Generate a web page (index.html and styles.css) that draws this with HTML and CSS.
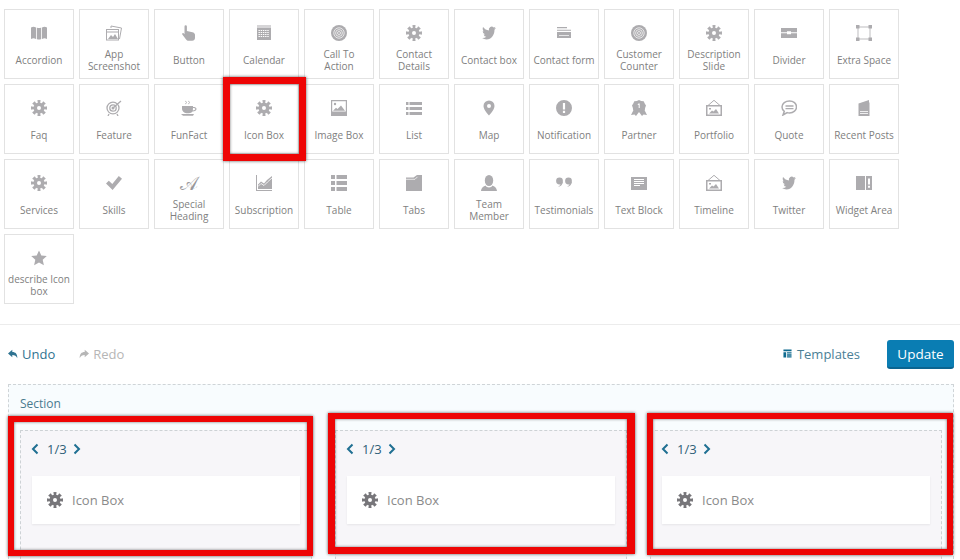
FILE: index.html
```html
<!DOCTYPE html>
<html lang="en">
<head>
<meta charset="utf-8">
<title>Page builder</title>
<link rel="stylesheet" href="styles.css">
</head>
<body>
<svg class="defs" aria-hidden="true">
  <symbol id="i-accordion" viewBox="0 0 16 16"><path d="M0 2.5c2-1 3-1 5 0V14c-2-1-3-1-5 0zM5.800 2.500c1 .7 3.400 .7 4.400 0V14c-1 .7-3.400 .7-4.400 0zM11 2.500c2-1 3-1 5 0V14c-2-1-3-1-5 0z"/></symbol>
  <symbol id="i-app" viewBox="0 0 16 16"><path d="M5 3V1l10.500 2-2 11" fill="none" stroke="currentColor"/><rect x=".5" y="4.500" width="12" height="10.500" fill="none" stroke="currentColor"/><path d="M1 6.500h11v1H1zM2 14l3-4 2 2 2-3 3 5z"/></symbol>
  <symbol id="i-hand" viewBox="0 0 16 16"><path d="M3.500 1.500a1.200 1.200 0 012.400 0V6l5.500 1.200c1.500.3 2.600 1.200 2.600 2.600V13c0 1.600-1.200 2.800-2.800 2.800H7.500c-1 0-1.800-.5-2.400-1.300L1.300 9.500c-.6-.8.400-1.800 1.300-1.200l.9.900z"/></symbol>
  <symbol id="i-calendar" viewBox="0 0 16 16"><path d="M1 .5h14v1H1zM1 2.500h14V15H1z"/><path d="M2.500 5.500h11M2.500 7.500h11M2.500 9.500h11M2.500 11.500h11" stroke="#fff" stroke-dasharray="1.400 .8"/></symbol>
  <symbol id="i-target" viewBox="0 0 16 16"><circle cx="8" cy="8" r="8"/><g fill="none" stroke="#fff" stroke-width=".7"><circle cx="8" cy="8" r="5.200"/><circle cx="8" cy="8" r="3.400"/><circle cx="8" cy="8" r="1.500"/></g></symbol>
  <symbol id="i-gear" viewBox="0 0 16 16"><g fill="none" stroke="currentColor"><circle cx="8" cy="8" r="3.800" stroke-width="3.600"/><circle cx="8" cy="8" r="6.500" stroke-width="3" pathLength="16" stroke-dasharray="1.150 .85" stroke-dashoffset=".575"/></g></symbol>
  <symbol id="i-twitter" viewBox="-2 0 28 24" preserveAspectRatio="none"><path d="M23.953 4.570a10 10 0 01-2.825.775 4.958 4.958 0 002.163-2.723c-.951.555-2.005.959-3.127 1.184a4.920 4.920 0 00-8.384 4.482C7.690 8.095 4.067 6.130 1.640 3.162a4.822 4.822 0 00-.666 2.475c0 1.710.870 3.213 2.188 4.096a4.904 4.904 0 01-2.228-.616v.060a4.923 4.923 0 003.946 4.827 4.996 4.996 0 01-2.212.085 4.936 4.936 0 004.604 3.417 9.867 9.867 0 01-6.102 2.105c-.390 0-.779-.023-1.170-.067a13.995 13.995 0 007.557 2.209c9.053 0 13.998-7.496 13.998-13.985 0-.210 0-.420-.015-.630A9.935 9.935 0 0024 4.590z"/></symbol>
  <symbol id="i-form" viewBox="0 0 16 16"><path d="M1 2h10v1.300H1zM1 4.800h14v1H1zM1 7h14v6H1z"/><path d="M3 10.500h10" stroke="#fff" stroke-width=".7"/></symbol>
  <symbol id="i-divider" viewBox="0 0 16 16"><path d="M0 3h16v4.300H10V6.300H6v1H0zM0 8.300h6v1h4v-1h6V13H0z"/></symbol>
  <symbol id="i-space" viewBox="0 0 16 16"><rect x="2" y="2" width="12" height="12" fill="none" stroke="currentColor" stroke-width=".8"/><path d="M0 0h3.500v3.500H0zM12.500 0H16v3.500h-3.500zM0 12.500h3.500V16H0zM12.500 12.500H16V16h-3.500z"/></symbol>
  <symbol id="i-feature" viewBox="0 0 16 16"><g fill="none" stroke="currentColor" stroke-width="1.300"><ellipse cx="7" cy="8" rx="6" ry="5.800"/><circle cx="7" cy="8" r="3.200"/><path d="M7 8l8-7M3 14l-1 2M11 14l1 2"/></g><circle cx="7" cy="8" r="1.500"/></symbol>
  <symbol id="i-cup" viewBox="0 0 16 16"><path d="M1 6h11v1c2 0 3.500.6 3.500 2s-1.500 2.500-4 2.500c-.8 1-2 1.700-3.500 1.700H5.500C3 13.200 1 11 1 8.500zM12 8l-.2 2.400c1.500-.1 2.500-.4 2.500-1.300S13.400 8 12 8zM0 14h13l-1 1.800H2z"/><path d="M4 1l2 1.500L4 4M7 1l2 1.500L7 4" fill="none" stroke="currentColor" stroke-width=".7"/></symbol>
  <symbol id="i-image" viewBox="0 0 16 16"><path fill-rule="evenodd" d="M0 0h16v16H0zM1.200 1.200V11.500h13.600V1.200z"/><path d="M2 10.800l3-3 1.500 1.300L10 5.500l4 5.300z"/><circle cx="4" cy="4" r="1.200"/></symbol>
  <symbol id="i-list" viewBox="0 0 16 16"><path d="M0 2h2.500v3H0zM3.500 2H16v3H3.500zM0 7h2.500v3H0zM3.500 7H16v3H3.500zM0 12h2.500v3H0zM3.500 12H16v3H3.500z"/></symbol>
  <symbol id="i-pin" viewBox="0 0 16 16"><path fill-rule="evenodd" d="M8 .5A5.500 5.500 0 002.500 6C2.500 10 8 15.500 8 15.500S13.500 10 13.500 6A5.500 5.500 0 008 .5zM8 4a2 2 0 110 4 2 2 0 010-4z"/></symbol>
  <symbol id="i-alert" viewBox="0 0 16 16"><path fill-rule="evenodd" d="M8 0a8 8 0 110 16A8 8 0 018 0zM6.900 3v6.500h2.200V3zM6.900 10.800V13h2.200v-2.200z"/></symbol>
  <symbol id="i-partner" viewBox="0 0 16 16"><path d="M3 9L0 15l3.500-.5L5 16l3-4 3 4 1.500-1.500L16 15l-3-6z"/><path fill-rule="evenodd" d="M8 0l2.200 1 2.500.2 1 2.200L15 5.500l-.8 2.300-.4 2.300-2.200 1-2 1.400L8 11.800l-1.600.7-2-1.400-2.200-1-.4-2.300L1 5.500l1.300-2.100 1-2.200L5.800 1zM7.500 3.500L6.500 4.500l.6.600.6-.4V8h1V3.500z"/></symbol>
  <symbol id="i-frame" viewBox="0 0 16 16"><path d="M8 .3L14 5.500H2z" fill="none" stroke="currentColor"/><path fill-rule="evenodd" d="M0 5h16v11H0zM1.500 6.500V14.500h13V6.500z"/><path d="M3 13.500l3-3 1.500 1 2.500-2.500 3 4.500z"/><path d="M3 8h2v1.500H3z"/></symbol>
  <symbol id="i-quote" viewBox="0 0 16 16"><path d="M8.500 1C4.500 1 1 3.400 1 7c0 1.800.9 3.300 2.300 4.300L2 15l4.200-2.400c.7.200 1.500.3 2.300.3 4 0 7-2.600 7-6S12.500 1 8.500 1z" fill="none" stroke="currentColor" stroke-width="1.500"/><path d="M4.500 5.300h8v1.400h-8zM4.500 7.900h8v1.400h-8z"/></symbol>
  <symbol id="i-post" viewBox="0 0 16 16"><path d="M2.500 3.500L13 0v2.500h.5V16h-11z"/><path d="M4 11.500h8M4 13.500h8" stroke="#fff" stroke-width=".8"/></symbol>
  <symbol id="i-check" viewBox="0 0 16 16"><path d="M0 8.500l2.800-2.800L6.300 9 12.800 1 16 3.700 6.600 15z"/></symbol>
  <symbol id="i-chart" viewBox="0 0 16 16"><path d="M0 0h1v15h15v1H0z"/><path d="M2 14V9.500l3-3 3 2L11 5l5-4v13z"/><path d="M2 11.500l3-3 3 2 3.500-3.500L16 3" fill="none" stroke="#fff" stroke-width=".8"/></symbol>
  <symbol id="i-table" viewBox="0 0 16 16"><path d="M0 0h4v4H0zM5.500 0H16v4H5.500zM0 6h4v4H0zM5.500 6H16v4H5.500zM0 12h4v4H0zM5.500 12H16v4H5.500z"/></symbol>
  <symbol id="i-tabs" viewBox="0 0 16 16"><path d="M0 16V2.500h7.500L11 0h5v16z"/><path d="M0 4.300h9l2.500-2.500" fill="none" stroke="#fff" stroke-width=".7"/></symbol>
  <symbol id="i-team" viewBox="0 0 16 16"><ellipse cx="8" cy="5.500" rx="4.200" ry="5.500"/><path d="M4.500 10.500C2.500 11.500.5 12.500 0 16h16c-.5-3.500-2.500-4.500-4.500-5.500C10.500 13 5.500 13 4.500 10.500z"/></symbol>
  <symbol id="i-quotes" viewBox="0 0 16 16"><circle cx="3.500" cy="6" r="3.400"/><circle cx="12.500" cy="6" r="3.400"/><path d="M6.900 6.500C6.700 9.500 5 11.500 2 12c1.500-1 2.300-2 2.500-3zM15.900 6.500c-.2 3-1.900 5-4.900 5.500 1.500-1 2.300-2 2.500-3z"/></symbol>
  <symbol id="i-text" viewBox="0 0 16 16"><path d="M0 2h16v13H0z"/><path d="M3 4.500h10M3 6.500h10M3 8.500h10M3 10.500h6" stroke="#fff"/></symbol>
  <symbol id="i-widget" viewBox="0 0 16 16"><path d="M0 1h9v14H0z"/><path fill-rule="evenodd" d="M10 1h6v14h-6zM12 3.500v6h2v-6zM12 10.800v2h2v-2z"/></symbol>
  <symbol id="i-star" viewBox="0 0 16 16"><path d="M8 .5l2.300 5 5.500.6-4.100 3.700 1.200 5.400L8 12.400l-4.900 2.800 1.200-5.400L.2 6.100l5.500-.6z"/></symbol>
  <symbol id="i-undo" viewBox="0 0 10 10"><path d="M4.300 .8L0 4.500l4.300 3.700V6c2.500 0 4 .7 5 3.200C9.500 5 7.500 3 4.300 3z"/></symbol>
  <symbol id="i-redo" viewBox="0 0 10 10"><path d="M5.700 .8L10 4.500 5.700 8.200V6c-2.500 0-4 .7-5 3.200C.5 5 2.500 3 5.700 3z"/></symbol>
  <symbol id="i-templates" viewBox="0 0 10 10"><path d="M.5.500h9v2h-9zM.5 3.500h3v6h-3zM4.500 3.500h5v1.500h-5zM4.500 5.900h5v1.500h-5zM4.500 8h5v1.500h-5z"/></symbol>
  <symbol id="i-prev" viewBox="0 0 8 12"><path d="M6.500 1.500L2 6l4.500 4.500" fill="none" stroke="currentColor" stroke-width="2"/></symbol>
  <symbol id="i-next" viewBox="0 0 8 12"><path d="M1.500 1.500L6 6l-4.500 4.500" fill="none" stroke="currentColor" stroke-width="2"/></symbol>
</svg>

<div class="palette">
  <div class="tile"><svg class="tile-icon"><use href="#i-accordion"/></svg><span class="tile-label">Accordion</span></div>
  <div class="tile"><svg class="tile-icon"><use href="#i-app"/></svg><span class="tile-label">App Screenshot</span></div>
  <div class="tile"><svg class="tile-icon"><use href="#i-hand"/></svg><span class="tile-label">Button</span></div>
  <div class="tile"><svg class="tile-icon"><use href="#i-calendar"/></svg><span class="tile-label">Calendar</span></div>
  <div class="tile"><svg class="tile-icon"><use href="#i-target"/></svg><span class="tile-label">Call To Action</span></div>
  <div class="tile"><svg class="tile-icon"><use href="#i-gear"/></svg><span class="tile-label">Contact Details</span></div>
  <div class="tile"><svg class="tile-icon"><use href="#i-twitter"/></svg><span class="tile-label">Contact box</span></div>
  <div class="tile"><svg class="tile-icon"><use href="#i-form"/></svg><span class="tile-label">Contact form</span></div>
  <div class="tile"><svg class="tile-icon"><use href="#i-target"/></svg><span class="tile-label">Customer Counter</span></div>
  <div class="tile"><svg class="tile-icon"><use href="#i-gear"/></svg><span class="tile-label">Description Slide</span></div>
  <div class="tile"><svg class="tile-icon"><use href="#i-divider"/></svg><span class="tile-label">Divider</span></div>
  <div class="tile"><svg class="tile-icon"><use href="#i-space"/></svg><span class="tile-label">Extra Space</span></div>

  <div class="tile"><svg class="tile-icon"><use href="#i-gear"/></svg><span class="tile-label">Faq</span></div>
  <div class="tile"><svg class="tile-icon"><use href="#i-feature"/></svg><span class="tile-label">Feature</span></div>
  <div class="tile"><svg class="tile-icon"><use href="#i-cup"/></svg><span class="tile-label">FunFact</span></div>
  <div class="tile"><svg class="tile-icon"><use href="#i-gear"/></svg><span class="tile-label">Icon Box</span></div>
  <div class="tile"><svg class="tile-icon"><use href="#i-image"/></svg><span class="tile-label">Image Box</span></div>
  <div class="tile"><svg class="tile-icon"><use href="#i-list"/></svg><span class="tile-label">List</span></div>
  <div class="tile"><svg class="tile-icon"><use href="#i-pin"/></svg><span class="tile-label">Map</span></div>
  <div class="tile"><svg class="tile-icon"><use href="#i-alert"/></svg><span class="tile-label">Notification</span></div>
  <div class="tile"><svg class="tile-icon"><use href="#i-partner"/></svg><span class="tile-label">Partner</span></div>
  <div class="tile"><svg class="tile-icon"><use href="#i-frame"/></svg><span class="tile-label">Portfolio</span></div>
  <div class="tile"><svg class="tile-icon"><use href="#i-quote"/></svg><span class="tile-label">Quote</span></div>
  <div class="tile"><svg class="tile-icon"><use href="#i-post"/></svg><span class="tile-label">Recent Posts</span></div>

  <div class="tile"><svg class="tile-icon"><use href="#i-gear"/></svg><span class="tile-label">Services</span></div>
  <div class="tile"><svg class="tile-icon"><use href="#i-check"/></svg><span class="tile-label">Skills</span></div>
  <div class="tile"><span class="tile-icon glyph-icon">𝒜</span><span class="tile-label">Special Heading</span></div>
  <div class="tile"><svg class="tile-icon"><use href="#i-chart"/></svg><span class="tile-label">Subscription</span></div>
  <div class="tile"><svg class="tile-icon"><use href="#i-table"/></svg><span class="tile-label">Table</span></div>
  <div class="tile"><svg class="tile-icon"><use href="#i-tabs"/></svg><span class="tile-label">Tabs</span></div>
  <div class="tile"><svg class="tile-icon"><use href="#i-team"/></svg><span class="tile-label">Team Member</span></div>
  <div class="tile"><svg class="tile-icon"><use href="#i-quotes"/></svg><span class="tile-label">Testimonials</span></div>
  <div class="tile"><svg class="tile-icon"><use href="#i-text"/></svg><span class="tile-label">Text Block</span></div>
  <div class="tile"><svg class="tile-icon"><use href="#i-frame"/></svg><span class="tile-label">Timeline</span></div>
  <div class="tile"><svg class="tile-icon"><use href="#i-twitter"/></svg><span class="tile-label">Twitter</span></div>
  <div class="tile"><svg class="tile-icon"><use href="#i-widget"/></svg><span class="tile-label">Widget Area</span></div>

  <div class="tile"><svg class="tile-icon"><use href="#i-star"/></svg><span class="tile-label">describe Icon box</span></div>
</div>

<div class="toolbar">
  <div class="toolbar-group">
    <a class="tool tool-active"><svg class="tool-icon"><use href="#i-undo"/></svg>Undo</a>
    <a class="tool tool-muted"><svg class="tool-icon"><use href="#i-redo"/></svg>Redo</a>
  </div>
  <div class="toolbar-group toolbar-right">
    <a class="tool tool-active tool-templates"><svg class="tool-icon tool-icon-small"><use href="#i-templates"/></svg>Templates</a>
    <button class="update" type="button">Update</button>
  </div>
</div>

<section class="section">
  <div class="section-label">Section</div>
  <div class="columns">
    <div class="column">
      <div class="pager"><svg class="chevron"><use href="#i-prev"/></svg><span>1/3</span><svg class="chevron"><use href="#i-next"/></svg></div>
      <div class="card"><svg class="card-icon"><use href="#i-gear"/></svg>Icon Box</div>
    </div>
    <div class="column">
      <div class="pager"><svg class="chevron"><use href="#i-prev"/></svg><span>1/3</span><svg class="chevron"><use href="#i-next"/></svg></div>
      <div class="card"><svg class="card-icon"><use href="#i-gear"/></svg>Icon Box</div>
    </div>
    <div class="column">
      <div class="pager"><svg class="chevron"><use href="#i-prev"/></svg><span>1/3</span><svg class="chevron"><use href="#i-next"/></svg></div>
      <div class="card"><svg class="card-icon"><use href="#i-gear"/></svg>Icon Box</div>
    </div>
  </div>
</section>

<div class="mark mark-tile"></div>
<div class="mark mark-col1"></div>
<div class="mark mark-col2"></div>
<div class="mark mark-col3"></div>
</body>
</html>
```

FILE: styles.css
```css
* { box-sizing: border-box; }

html, body {
  margin: 0;
  height: 560px;
  overflow: hidden;
  background: #fff;
}

body {
  position: relative;
  font-family: "Open Sans", "Liberation Sans", sans-serif;
  color: #777;
}

.defs { display: none; }

svg { fill: currentColor; }

.palette {
  height: 325px;
  padding: 9px 0 0 4px;
  border-bottom: 1px solid #ececec;
  display: flex;
  flex-wrap: wrap;
  align-content: flex-start;
  gap: 5px;
  width: 100%;
}

.tile {
  flex: 0 0 70px;
  height: 70px;
  padding: 15px 3px 0;
  border: 1px solid #e2e2e2;
  background: #fff;
  display: flex;
  flex-direction: column;
  align-items: center;
}

.tile:nth-child(12n) { margin-right: 61px; }

.tile-icon {
  width: 16px;
  height: 16px;
  color: #adacaf;
  flex: none;
}

.glyph-icon {
  display: flex;
  align-items: center;
  justify-content: center;
  font-family: "DejaVu Serif", "DejaVu Sans", serif;
  font-size: 19px;
  line-height: 16px;
  color: #99989b;
}

.tile-label {
  margin-top: 7px;
  height: 24px;
  display: flex;
  align-items: center;
  text-align: center;
  font-size: 10px;
  line-height: 12px;
  color: #808080;
}

.toolbar {
  height: 59px;
  padding: 0 6px 0 8px;
  display: flex;
  align-items: center;
  justify-content: space-between;
}

.toolbar-group {
  display: flex;
  align-items: center;
  gap: 24px;
}

.toolbar-right { gap: 27px; }

.tool {
  display: flex;
  align-items: center;
  gap: 4px;
  padding-bottom: 2px;
  font-size: 13px;
  line-height: 18px;
}

.tool-active { color: #2f7391; }
.tool-muted { color: #b6b6b6; }
.tool-templates { gap: 5px; color: #4b7f96; }
.tool-templates .tool-icon { color: #0f6a8f; }

.tool-icon {
  width: 10px;
  height: 10px;
}

.tool-icon-small {
  width: 9px;
  height: 9px;
}

.update {
  width: 67px;
  height: 29px;
  padding: 0;
  border: 0;
  border-bottom: 2px solid #0a6490;
  border-radius: 3px;
  background: #0a7db3;
  color: #fff;
  font-family: inherit;
  font-size: 13.500px;
}

.section {
  margin: 0 6px 0 8px;
  height: 175px;
  padding: 11px 11px 0;
  border: 1px dashed #cfd4d7;
  border-bottom: 0;
  background: #f8fcfe;
  overflow: hidden;
}

.section-label {
  font-size: 12px;
  line-height: 16px;
  color: #4a7a8f;
}

.columns {
  margin-top: 18px;
  display: grid;
  grid-template-columns: repeat(3, 292px);
  gap: 23px;
}

.column {
  height: 160px;
  padding: 8px 11px 0;
  border: 1px dashed #cdd2d5;
  background: #f7f6f9;
}

.pager {
  height: 20px;
  display: flex;
  align-items: center;
  gap: 8px;
  font-size: 13px;
  color: #2f5f78;
}

.chevron {
  width: 8px;
  height: 12px;
  color: #1f6f92;
  margin-left: -1px;
}

.chevron:last-child { margin-left: -2px; }

.card {
  margin-top: 17px;
  height: 48px;
  padding-left: 15px;
  display: flex;
  align-items: center;
  gap: 9px;
  font-size: 13px;
  color: #8a8a8a;
  background: #fff;
  box-shadow: 0 1px 2px rgba(0, 0, 0, .07);
}

.card-icon {
  width: 16px;
  height: 16px;
  color: #77767a;
}

.mark {
  position: absolute;
  border-style: solid;
  border-color: #ee0505;
  box-shadow: 0 0 3px rgba(0, 0, 0, .65), inset 0 0 3px rgba(0, 0, 0, .55);
}

.mark-tile {
  left: 223px;
  top: 77px;
  width: 83px;
  height: 84px;
  border-width: 7px;
}

.mark-col1 {
  left: 8px;
  top: 416px;
  width: 305px;
  height: 140px;
  border-width: 6px;
}

.mark-col2 {
  left: 328px;
  top: 413px;
  width: 307px;
  height: 141px;
  border-width: 6px 8px 7px 7px;
}

.mark-col3 {
  left: 647px;
  top: 413px;
  width: 306px;
  height: 142px;
  border-width: 6px;
}
```
